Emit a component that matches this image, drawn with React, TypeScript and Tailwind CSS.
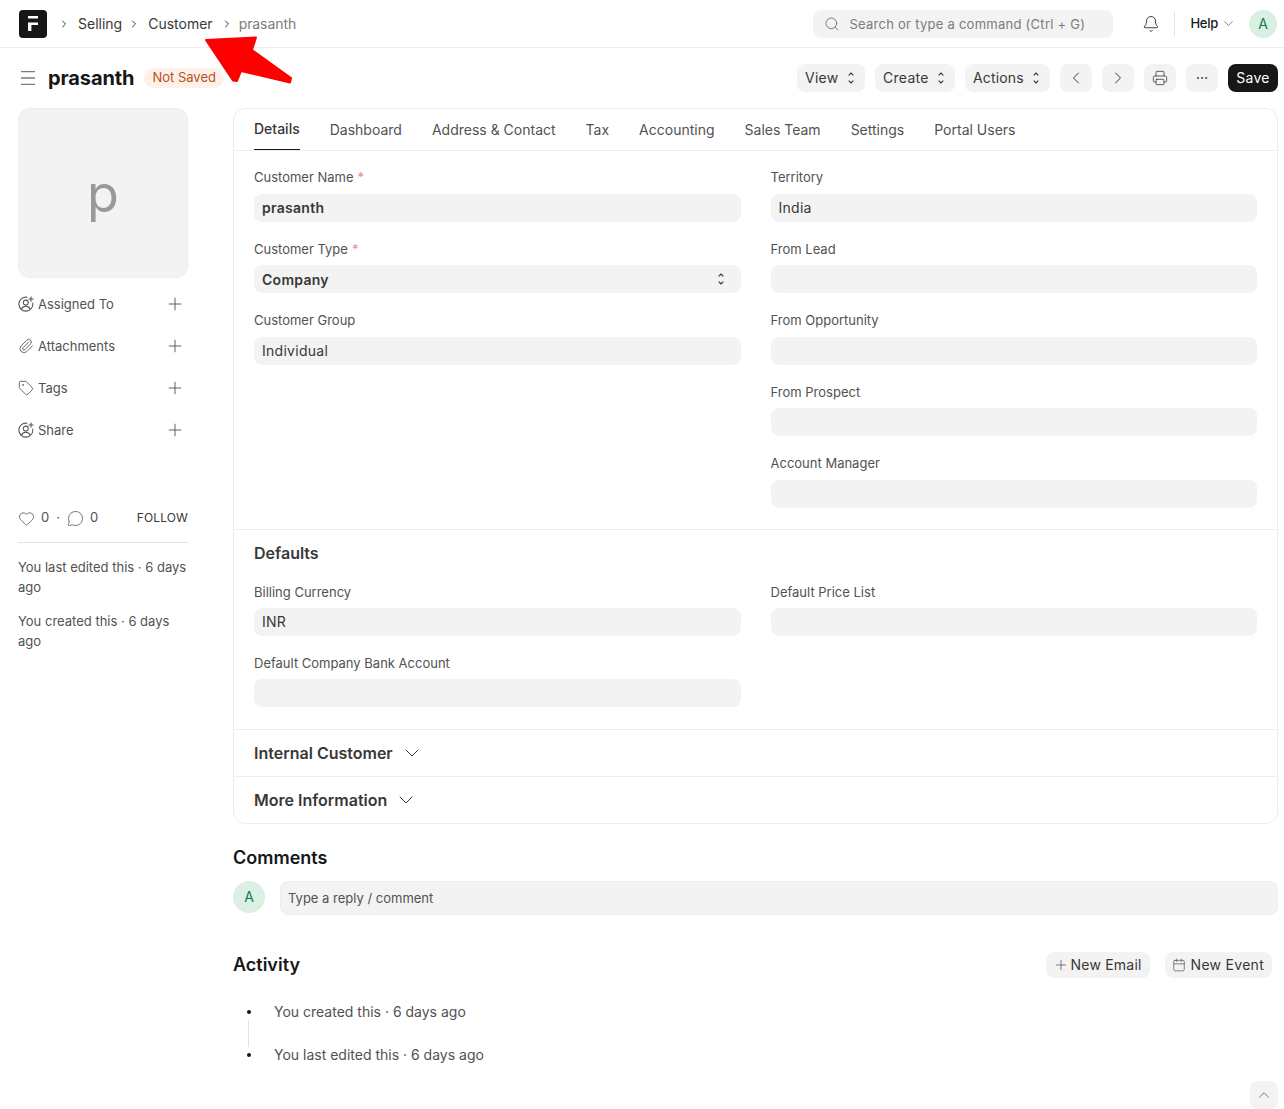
import React from "react";
import { Bell, Calendar, ChevronDown, ChevronLeft, ChevronRight, ChevronUp, Ellipsis, Heart, MessageCircle, Paperclip, Plus, Printer, Search, Tag } from "lucide-react";

function UpDown({ className = "" }: { className?: string }) {
  return (
    <svg width="12" height="16" viewBox="0 0 12 16" fill="none" stroke="currentColor" strokeWidth="1.1" strokeLinecap="round" strokeLinejoin="round" className={`shrink-0 ${className}`}>
      <path d="M4 5.100 6 3l2 2.100" />
      <path d="M4 10.900 6 13l2-2.100" />
    </svg>
  );
}

function UserPlus() {
  return (
    <svg width="16" height="16" viewBox="0 0 16 16" fill="none" stroke="currentColor" strokeWidth="1.05" strokeLinecap="round" className="shrink-0">
      <path d="M9 1.200A7 7 0 1 0 14.800 7" />
      <circle cx="7.800" cy="6.600" r="2.500" />
      <path d="M3.400 13.200c.8-2 2.400-3 4.400-3s3.600 1 4.400 3" />
      <path d="M13 .8v4.400M10.800 3h4.400" />
    </svg>
  );
}

function Field({ label, value, required, bold, select, tight }: { label: string; value?: string; required?: boolean; bold?: boolean; select?: boolean; tight?: boolean }) {
  return (
    <div className="flex flex-col">
      <div className="h-[16px] text-[13px] leading-[16px] text-[#525252]">
        {label}
        {required && <span className="ml-[4px] text-[#f08a8a]">*</span>}
      </div>
      <div className={`${tight ? "mt-[8px]" : "mt-[8.9px]"} flex h-[28px] items-center justify-between rounded-[8px] bg-[#f3f3f3] px-[8px] text-[14px] tracking-[0.02em] text-[#383838] ${bold ? "font-semibold" : ""}`}>
        <span>{value}</span>
        {select && <UpDown className="mr-[6px] text-[#383838]" />}
      </div>
    </div>
  );
}

function SideRow({ icon, label }: { icon: React.ReactNode; label: string }) {
  return (
    <div className="flex h-[42px] items-center text-[13px] text-[#525252]">
      <span className="flex w-[20px] shrink-0 items-center text-[#525252]">{icon}</span>
      <span className="mt-[2px]">{label}</span>
      <Plus size={20} strokeWidth={1.1} className="ml-auto mr-[3px] text-[#525252]" />
    </div>
  );
}

function Btn({ children, className = "" }: { children: React.ReactNode; className?: string }) {
  return (
    <div className={`flex items-center rounded-[8px] bg-[#f3f3f3] text-[14px] tracking-[0.02em] text-[#383838] ${className}`}>{children}</div>
  );
}

function Collapsible({ title }: { title: string }) {
  return (
    <div className="flex h-[47px] items-center border-t border-[#ededed] pl-[20px] text-[16px] font-semibold text-[#383838]">
      {title}
      <ChevronDown size={24} strokeWidth={1} className="ml-[7px] text-[#383838]" />
    </div>
  );
}

export default function App() {
  const tabs = ["Dashboard", "Address & Contact", "Tax", "Accounting", "Sales Team", "Settings", "Portal Users"];
  return (
    <div className="relative h-[1109px] overflow-hidden bg-white font-['Inter',sans-serif] text-[#171717]">
      <header className="flex h-[48px] items-center border-b border-[#ededed] pl-[19px] pr-[7px]">
        <svg width="28" height="28" viewBox="0 0 28 28" className="shrink-0">
          <rect width="28" height="28" rx="4" fill="#171717" />
          <path d="M9 6h10v2.600H9zM9 12.500h10v2.600h-6.600v6H9z" fill="#fff" />
        </svg>
        <ChevronRight size={12} strokeWidth={2} className="ml-[11px] text-[#383838]" />
        <span className="ml-[8px] text-[14px] text-[#383838]">Selling</span>
        <ChevronRight size={12} strokeWidth={2} className="ml-[6px] text-[#383838]" />
        <span className="ml-[8px] text-[14px] text-[#383838]">Customer</span>
        <ChevronRight size={12} strokeWidth={2} className="ml-[8px] text-[#383838]" />
        <span className="ml-[6px] text-[14px] tracking-[-0.005em] text-[#7c7c7c]">prasanth</span>
        <div className="ml-auto flex h-[28px] w-[300px] items-center rounded-[8px] bg-[#f3f3f3] pl-[11px] text-[13px] tracking-[0.02em] text-[#7c7c7c]">
          <Search size={16} strokeWidth={1.1} className="mr-[9px] text-[#525252]" />
          <span className="mt-[2px]">Search or type a command (Ctrl + G)</span>
        </div>
        <Bell size={18} strokeWidth={1.1} className="ml-[29px] text-[#171717]" />
        <div className="ml-[14px] h-[24px] w-px bg-[#e2e2e2]" />
        <span className="ml-[15px] text-[13px] font-medium tracking-[-0.02em] text-[#171717]">Help</span>
        <ChevronDown size={15} strokeWidth={1.1} className="ml-[2.5px] text-[#525252]" />
        <div className="ml-[13.5px] flex h-[28px] w-[28px] items-center justify-center rounded-full bg-[#d9f0e3] text-[14px] text-[#137b55]">A</div>
      </header>

      <div className="flex h-[60px] items-center pl-[20px] pr-[6px]">
        <svg width="16" height="16" viewBox="0 0 16 16" fill="none" stroke="#7c7c7c" strokeWidth="1.300" className="shrink-0">
          <path d="M1 1.700h14M1 8h14M1 14.300h14" />
        </svg>
        <h1 className="ml-[12px] text-[20px] font-bold leading-[28px] tracking-[-0.005em] text-[#171717]">prasanth</h1>
        <span className="ml-[10px] flex h-[20px] items-center rounded-full bg-[#fff0e8] px-[8px] text-[13px] text-[#b8502a]">Not Saved</span>
        <div className="ml-auto flex items-center gap-[10px]">
          <Btn className="h-[28px] w-[68px] justify-between px-[8px]"><span className="-mt-[2px]">View</span><UpDown /></Btn>
          <Btn className="h-[28px] w-[80px] justify-between px-[8px]"><span className="-mt-[2px]">Create</span><UpDown /></Btn>
          <Btn className="h-[28px] w-[85px] justify-between px-[8px]"><span className="-mt-[2px] tracking-[0.01em]">Actions</span><UpDown /></Btn>
          <Btn className="h-[28px] w-[32px] justify-center"><ChevronLeft size={20} strokeWidth={1.2} /></Btn>
          <Btn className="h-[28px] w-[32px] justify-center"><ChevronRight size={20} strokeWidth={1.2} /></Btn>
          <Btn className="h-[28px] w-[32px] justify-center"><Printer size={16} strokeWidth={1.2} /></Btn>
          <Btn className="h-[28px] w-[32px] justify-center"><Ellipsis size={14} strokeWidth={1.5} /></Btn>
          <div className="flex h-[28px] w-[50px] items-center justify-center rounded-[8px] bg-[#171717] text-[14px] tracking-[0.02em] text-white"><span className="-mt-[2px]">Save</span></div>
        </div>
      </div>

      <div className="flex pl-[18px] pr-[6px]">
        <aside className="w-[170px] shrink-0">
          <div className="flex h-[170px] items-center justify-center rounded-[12px] border border-[#ededed] bg-[#f3f3f3] pt-[2px] text-[52px] text-[#999999]">p</div>
          <div className="mt-[5px]">
            <SideRow icon={<UserPlus />} label="Assigned To" />
            <SideRow icon={<Paperclip size={16} strokeWidth={1.3} />} label="Attachments" />
            <SideRow icon={<Tag size={16} strokeWidth={1.3} />} label="Tags" />
            <SideRow icon={<UserPlus />} label="Share" />
          </div>
          <div className="mt-[55px] flex h-[24px] items-center text-[13px] text-[#525252]">
            <Heart size={17} strokeWidth={1.1} />
            <span className="ml-[6px]">0</span>
            <span className="ml-[7px]">·</span>
            <MessageCircle size={17} strokeWidth={1.1} className="ml-[7px]" />
            <span className="ml-[6px]">0</span>
            <span className="ml-auto text-[12px] tracking-[0.01em] text-[#383838]">FOLLOW</span>
          </div>
          <div className="mt-[12px] border-t border-[#e2e2e2] pt-[14px] text-[13px] leading-[20px] text-[#525252]">
            <p>You last edited this · 6 days ago</p>
            <p className="mt-[14px]">You created this · 6 days ago</p>
          </div>
        </aside>

        <main className="ml-[45px] min-w-0 flex-1">
          <section className="rounded-[12px] border border-[#ededed]">
            <nav className="flex h-[42px] items-end gap-[30px] border-b border-[#ededed] pl-[20px] text-[14px] text-[#525252]">
              <span className="flex h-[41px] items-center border-b border-[#171717] pb-[2px] font-medium text-[#383838]">Details</span>
              {tabs.map((t) => (
                <span key={t} className="flex h-[41px] items-center">{t}</span>
              ))}
            </nav>
            <div className="grid grid-cols-2 gap-x-[30px] px-[20px] pb-[21px] pt-[18px]">
              <div className="flex flex-col gap-[18.64px]">
                <Field label="Customer Name" value="prasanth" required bold />
                <Field label="Customer Type" value="Company" required bold select />
                <Field label="Customer Group" value="Individual" />
              </div>
              <div className="flex flex-col gap-[18.64px]">
                <Field label="Territory" value="India" />
                <Field label="From Lead" />
                <Field label="From Opportunity" />
                <Field label="From Prospect" />
                <Field label="Account Manager" />
              </div>
            </div>
            <div className="border-t border-[#ededed] px-[20px] pb-[21.5px] pt-[13px]">
              <h3 className="h-[20px] text-[16px] font-semibold leading-[20px] text-[#383838]">Defaults</h3>
              <div className="mt-[21px] grid grid-cols-2 gap-x-[30px]">
                <div className="flex flex-col gap-[18.64px]">
                  <Field label="Billing Currency" value="INR" tight />
                  <Field label="Default Company Bank Account" />
                </div>
                <Field label="Default Price List" tight />
              </div>
            </div>
            <Collapsible title="Internal Customer" />
            <Collapsible title="More Information" />
          </section>

          <h2 className="mt-[22px] text-[18px] font-semibold leading-[24px] text-[#171717]">Comments</h2>
          <div className="mt-[11px] flex">
            <div className="flex h-[32px] w-[32px] shrink-0 items-center justify-center rounded-full bg-[#d9f0e3] text-[14px] text-[#137b55]">A</div>
            <div className="ml-[15px] flex h-[34px] flex-1 items-center rounded-[8px] border border-[#ededed] bg-[#f3f3f3] px-[7px] pt-[2px] text-[13px] text-[#525252]">Type a reply / comment</div>
          </div>

          <div className="mr-[6px] mt-[37px] flex h-[26px] items-center">
            <h2 className="text-[18px] font-semibold leading-[26px] text-[#171717]">Activity</h2>
            <Btn className="ml-auto h-[26px] pl-[7px] pr-[8px] tracking-[0.015em]"><Plus size={16} strokeWidth={1.1} className="mr-[2px] text-[#525252]" /><span className="-mt-[1px]">New Email</span></Btn>
            <Btn className="ml-[15px] h-[26px] pl-[7px] pr-[8px]"><Calendar size={14} strokeWidth={1.2} className="mr-[5px] text-[#525252]" /><span className="-mt-[1px]">New Event</span></Btn>
          </div>

          <div className="mt-[24px] flex text-[14px] text-[#525252]">
            <div className="flex w-[41px] shrink-0 flex-col items-center">
              <div className="mr-[10px] flex flex-col items-center">
                <span className="mt-[8px] h-[4px] w-[4px] rounded-full bg-[#171717]" />
                <span className="mt-[6px] h-[27px] w-px bg-[#e2e2e2]" />
                <span className="mt-[6px] h-[4px] w-[4px] rounded-full bg-[#171717]" />
              </div>
            </div>
            <div className="flex flex-col gap-[23px]">
              <p className="leading-[20px]">You created this · 6 days ago</p>
              <p className="leading-[20px]">You last edited this · 6 days ago</p>
            </div>
          </div>
        </main>
      </div>

      <svg width="100" height="56" viewBox="0 0 100 56" className="pointer-events-none absolute left-[200px] top-[33px]">
        <path d="M6 7 56 4.500 52 17 91 45 90 49.500 41 38 37 48 33 47.500Z" fill="#ff0000" stroke="#ff0000" strokeWidth="2" strokeLinejoin="round" />
      </svg>

      <div className="absolute bottom-0 right-[6px] flex h-[28px] w-[28px] items-center justify-center rounded-[8px] bg-[#f3f3f3] text-[#525252]">
        <ChevronUp size={18} strokeWidth={1} />
      </div>
    </div>
  );
}
